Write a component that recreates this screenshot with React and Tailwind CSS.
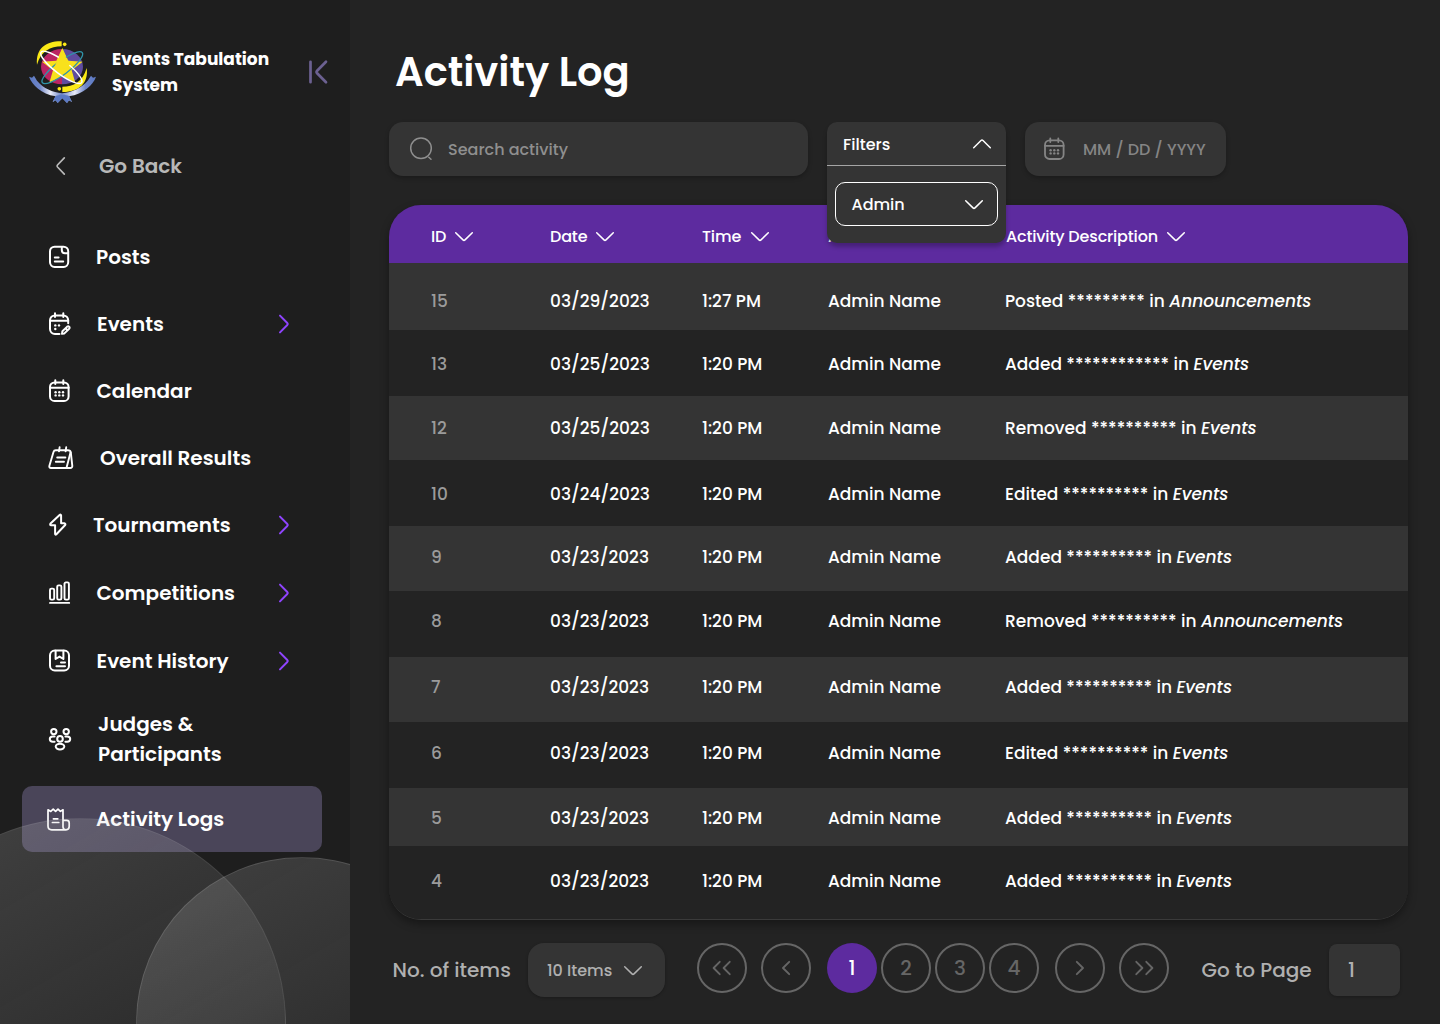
import React from "react";

const Svg = ({ w = 24, h = 24, sw = 2, className = "", children }) => (
  <svg
    width={w}
    height={h}
    viewBox={`0 0 ${w} ${h}`}
    fill="none"
    stroke="currentColor"
    strokeWidth={sw}
    strokeLinecap="round"
    strokeLinejoin="round"
    className={`shrink-0 ${className}`}
  >
    {children}
  </svg>
);

const ChevronDown = ({ className = "" }) => (
  <Svg w={20} h={12} sw={1.5} className={className}>
    <path d="M1.7 1.7 L9 8.9 Q10 9.9 11 8.9 L18.3 1.7" />
  </Svg>
);

const ChevronUp = () => (
  <Svg w={20} h={12} sw={1.5}>
    <path d="M1.7 9.7 L9 2.5 Q10 1.5 11 2.5 L18.3 9.7" />
  </Svg>
);

const NavArrow = () => (
  <Svg w={12} h={20} sw={2} className="text-[#8f44fd]">
    <path d="M2 1.6 L9.3 9 Q10.3 10 9.3 11 L2 18.4" />
  </Svg>
);

const dot = (x, y) => <circle key={`${x}-${y}`} cx={x} cy={y} r="1.2" fill="currentColor" stroke="none" />;

const CalendarIcon = ({ sw = 2, className }) => (
  <Svg sw={sw} className={className}>
    <rect x="3" y="3.4" width="18.6" height="18.6" rx="4.6" />
    <path d="M3 8.8 H21.6 M8.3 1.3 V5 M16.3 1.3 V5" />
    {[8.6, 12.3, 16].map((x) => [13.2, 16.4].map((y) => dot(x, y)))}
  </Svg>
);

const PostsIcon = () => (
  <Svg>
    <rect x="3" y="1.7" width="18.2" height="20.2" rx="4.6" />
    <path d="M14.8 2 V5 Q14.8 8.2 18 8.2 H21 M7.8 12.6 H11.6 M7.8 16.6 H16.2" />
  </Svg>
);

const EventsIcon = () => (
  <Svg>
    <path d="M12.5 22 H8 A5 5 0 0 1 3 17 V8.3 A5 5 0 0 1 8 3.4 H16.2 A5 5 0 0 1 21.2 8.3 V11.2" />
    <path d="M3 8.8 H21.2 M8 1.3 V5 M16.3 1.3 V5" />
    {dot(8.3, 13.4)}
    {dot(12, 13.4)}
    {dot(8.3, 17)}
    <path d="M15 21.8 L15.4 19.2 L20.2 14.6 C21.6 13.6 23.3 15.2 22.2 16.7 L17.4 21.4 Z M18.7 16.4 L20.4 18.2" />
  </Svg>
);

const ResultsIcon = () => (
  <Svg w={27} sw={1.9}>
    <path d="M8.7 4.2 H20.8 C22.6 4.2 23.6 5 23.8 6.5 L25.3 19.8 C25.4 21 24.6 22 23.3 22 H4 C2.7 22 2 21 2.4 19.7 L6.5 6 Q7 4.2 8.7 4.2 Z" />
    <path d="M23.5 6.4 L19.6 21.6 M12.6 1.3 L12 5.4 M19.2 1.3 L18.6 5.4 M10.2 11.5 H18.4 M8.8 15.7 H17" />
  </Svg>
);

const BoltIcon = () => (
  <Svg>
    <path d="M12.6 2 L3.5 10.6 Q2.5 12 4.3 12.3 H8.1 V20.8 Q8.3 22.3 9.4 21.3 L18.2 12 Q18.9 10.6 17.3 10.3 H14.1 V2.5 Q13.8 1 12.6 2 Z" />
  </Svg>
);

const BarsIcon = () => (
  <Svg sw={1.9}>
    <rect x="3" y="7.6" width="4.2" height="11" rx="1.4" />
    <rect x="10.2" y="4.4" width="4.2" height="14.2" rx="1.4" />
    <rect x="17.5" y="1.4" width="4.4" height="17.2" rx="1.4" />
    <path d="M3 21.9 H22.2" />
  </Svg>
);

const HistoryIcon = () => (
  <Svg>
    <rect x="3" y="1.5" width="19" height="20" rx="4.8" />
    <path d="M8.6 1.7 V10 L12.5 7.6 L16.4 10 V1.7 M14 13.4 H18 M9.4 17.3 H18" />
  </Svg>
);

const PeopleIcon = () => (
  <Svg w={26}>
    <circle cx="6.8" cy="4.6" r="2.7" />
    <circle cx="19.2" cy="4.6" r="2.7" />
    <circle cx="13" cy="11.9" r="2.8" />
    <ellipse cx="13" cy="19.6" rx="4.3" ry="2.8" />
    <path d="M7.6 9.5 H5.8 C1.8 9.5 1.8 14.7 5.8 14.7 H7.6 M18.4 9.5 H20.2 C24.2 9.5 24.2 14.7 20.2 14.7 H18.4" />
  </Svg>
);

const LogsIcon = () => (
  <Svg w={26} sw={1.7} className="-mt-px">
    <path d="M2 2.8 V19 Q2 22.8 5.8 22.8 H20 M2 2.8 L4.8 4.4 L7.2 2.2 L9.6 4.4 L12 2.2 L14.4 4.4 L17 2.8 V20 Q17.2 22.8 20 22.8 Q23.2 22.8 23.2 19.6 V16 Q23.2 13.4 20.8 13.4 H17" />
    <path d="M7.4 11.8 H11.8 M6.4 15.5 H12.8" />
  </Svg>
);

const Logo = () => (
  <svg width="68" height="65" viewBox="28 30 204 195" fill="none" className="shrink-0">
    <defs>
      <linearGradient id="ribbon" x1="28" y1="0" x2="230" y2="0" gradientUnits="userSpaceOnUse">
        <stop offset="0" stopColor="#5b79c4" />
        <stop offset="0.16" stopColor="#6f86c8" />
        <stop offset="0.32" stopColor="#e9ebf7" />
        <stop offset="0.48" stopColor="#6f86c8" />
        <stop offset="0.68" stopColor="#e9ebf7" />
        <stop offset="0.84" stopColor="#6f86c8" />
        <stop offset="1" stopColor="#5b79c4" />
      </linearGradient>
    </defs>
    <path d="M127 57 A63 53 0 0 0 127 163 Z" fill="#bb2463" />
    <path d="M127 57 A63 53 0 0 1 127 163 Z" fill="#5f4c9f" />
    <path d="M52 104 C48 56 78 33 126 34 V49 C92 49 64 64 52 104 Z" fill="#fbe916" />
    <circle cx="135" cy="43" r="5.5" fill="#fbe916" />
    <path d="M201 114 C208 160 176 187 128 186 V170 C162 170 189 156 201 114 Z" fill="#fbe916" />
    <circle cx="119" cy="176.5" r="5.5" fill="#fbe916" />
    <path d="M128 54 L146 92 L189 95 L156 121 L167 158 L128 138 L89 158 L100 121 L67 95 L110 92 Z" fill="#f8e11c" />
    <ellipse cx="128" cy="113" rx="75" ry="20" transform="rotate(-37 128 113)" stroke="#2f93a8" strokeWidth="4" />
    <ellipse cx="125" cy="112" rx="76" ry="20" transform="rotate(37 125 112)" stroke="#fff" strokeWidth="4.5" />
    <path d="M128 56 L143 92 L158 94 L140 118 L104 110 L113 92 Z" fill="#f8e11c" />
    <path
      d="M28 140 L37 143 L43 137 L52 152 C72 176 98 186 128 190 C158 186 184 175 204 152 L214 137 L220 143 L229 140 C220 165 192 192 148 199 L157 216 L148 211 L142 219 L128 205 L114 219 L108 211 L99 216 L108 199 C64 192 38 165 28 140 Z"
      fill="url(#ribbon)"
    />
    <path d="M107 199 C118 193 138 193 149 199 L157 216 L148 211 L142 219 L128 205 L114 219 L108 211 L99 216 Z" fill="#5b79c4" />
  </svg>
);

const NAV = [
  { label: "Posts", Icon: PostsIcon, row: "h-[67px]", text: "ml-0" },
  { label: "Events", Icon: EventsIcon, row: "h-[67px]", text: "ml-px", arrow: true },
  { label: "Calendar", Icon: CalendarIcon, row: "h-[67px]", text: "ml-[0.5px]" },
  { label: "Overall Results", Icon: ResultsIcon, row: "h-[67px]", text: "ml-1" },
  { label: "Tournaments", Icon: BoltIcon, row: "h-[67px]", text: "-ml-[3px]", arrow: true },
  { label: "Competitions", Icon: BarsIcon, row: "h-[69px]", text: "ml-[0.5px]", arrow: true },
  { label: "Event History", Icon: HistoryIcon, row: "h-[67px]", text: "ml-[0.5px]", arrow: true },
  { label: "Judges & Participants", Icon: PeopleIcon, row: "h-[89px]", text: "ml-0.5" },
];

function Sidebar() {
  return (
    <aside className="relative h-[1024px] w-[350px] shrink-0 overflow-hidden bg-[#1e1e1e] text-white">
      <div className="flex h-[105px] items-start pt-10 pl-[29px]">
        <Logo />
        <div className="mt-[6px] ml-[15px] w-[180px] text-[17px] leading-[26px] font-bold">
          Events Tabulation System
        </div>
        <Svg w={22} h={26} sw={2.7} className="mt-[19px] ml-[15px] text-[#6c6191]">
          <path d="M3.5 2.8 V23.2 M19 2.8 L9.9 12 Q9 13 9.9 14 L19 23.2" />
        </Svg>
      </div>

      <div className="mt-[46px] flex h-[30px] items-center pl-[55px] text-[#b8b8b8]">
        <Svg w={12} h={20} sw={1.7}>
          <path d="M9.3 1.8 L2.5 9 Q1.6 10 2.5 11 L9.3 18.2" />
        </Svg>
        <span className="ml-8 text-[20px] font-semibold">Go Back</span>
      </div>

      <nav className="mt-[42px] text-[20px] leading-[30px] font-semibold">
        {NAV.map(({ label, Icon, row, text, arrow }) => (
          <div key={label} className={`flex items-center pr-[60px] pl-[47px] ${row}`}>
            <div className="w-[49px] shrink-0">
              <Icon />
            </div>
            <span className={`w-[170px] ${text}`}>{label}</span>
            {arrow && (
              <span className="ml-auto">
                <NavArrow />
              </span>
            )}
          </div>
        ))}
        <div className="mt-[3px] ml-[22px] flex h-[66px] w-[300px] items-center rounded-[10px] bg-[#4a4559] pl-6">
          <div className="w-[50px]">
            <LogsIcon />
          </div>
          <span>Activity Logs</span>
        </div>
      </nav>

      <div className="absolute top-[818px] left-[-126px] size-[412px] rounded-full border border-white/7 bg-linear-150 from-[#c8c8c8]/22 to-[#c8c8c8]/1" />
      <div className="absolute top-[857px] left-[136px] size-[332px] rounded-full border border-white/12 bg-linear-150 from-[#d0d0d0]/20 to-[#d0d0d0]/3" />
    </aside>
  );
}

const COLS = "grid grid-cols-[119px_152px_126px_177px_1fr] pl-[42px]";

const ROWS = [
  ["15", "03/29/2023", "1:27 PM", "Posted *********", "Announcements", "h-[67px] pt-[11px]"],
  ["13", "03/25/2023", "1:20 PM", "Added ************", "Events", "h-[66px] pt-[4px]"],
  ["12", "03/25/2023", "1:20 PM", "Removed **********", "Events", "h-[64px] pt-[2px]"],
  ["10", "03/24/2023", "1:20 PM", "Edited **********", "Events", "h-[66px] pt-[4px]"],
  ["9", "03/23/2023", "1:20 PM", "Added **********", "Events", "h-[65px] pb-px"],
  ["8", "03/23/2023", "1:20 PM", "Removed **********", "Announcements", "h-[66px] pb-[4px]"],
  ["7", "03/23/2023", "1:20 PM", "Added **********", "Events", "h-[65px] pb-[3px]"],
  ["6", "03/23/2023", "1:20 PM", "Edited **********", "Events", "h-[66px] pb-[2px]"],
  ["5", "03/23/2023", "1:20 PM", "Added **********", "Events", "h-[58px] pt-[4px]"],
  ["4", "03/23/2023", "1:20 PM", "Added **********", "Events", "h-[73px] pb-px"],
];

const HeadCell = ({ label, className = "gap-[7.5px]" }) => (
  <div className={`flex items-center ${className}`}>
    <span>{label}</span>
    <ChevronDown />
  </div>
);

function Table() {
  return (
    <section className="mt-[29px] w-[1019px] overflow-hidden rounded-[32px] border-b border-[#3a3a3a] bg-[#232323] text-white shadow-[0_4px_8px_rgba(0,0,0,0.35)]">
      <div className={`${COLS} h-[58px] items-center bg-[#5d2b9f] pt-[5px] text-[16px] font-medium tracking-[-0.01em]`}>
        <HeadCell label="ID" />
        <HeadCell label="Date" />
        <HeadCell label="Time" className="gap-[9px]" />
        <HeadCell label="Admin" />
        <HeadCell label="Activity Description" className="gap-[8px] pl-px" />
      </div>
      {ROWS.map(([id, date, time, action, place, size], i) => (
        <div
          key={id}
          className={`${COLS} items-center text-[17px] font-medium ${size} ${i % 2 === 0 ? "bg-[#343434]" : "bg-[#232323]"}`}
        >
          <span className="text-[#9b9b9b]">{id}</span>
          <span>{date}</span>
          <span>{time}</span>
          <span>Admin Name</span>
          <span className="whitespace-nowrap">
            {action} in <em>{place}</em>
          </span>
        </div>
      ))}
    </section>
  );
}

function Toolbar() {
  return (
    <div className="mt-[20px] flex h-[54px] items-start gap-[19px]">
      <div className="flex h-[54px] w-[419px] items-center rounded-[14px] bg-[#343434] pl-5 text-[16px] font-medium text-[#8f8f8f] shadow-[0_2px_4px_rgba(0,0,0,0.25)]">
        <Svg w={26} h={26} sw={1.5}>
          <circle cx="12" cy="12.3" r="10.3" />
          <path d="M19.8 21.3 L22 23.2" />
        </Svg>
        <span className="ml-[13px] pt-0.5">Search activity</span>
      </div>

      <div className="relative z-10 h-[121px] w-[179px] shrink-0 rounded-[10px] bg-[#343434] text-[16px] font-medium text-white shadow-[0_4px_4px_rgba(0,0,0,0.25)]">
        <div className="flex h-[44px] items-center justify-between border-b border-[#a5a5a5] pr-[14px] pl-4">
          <span className="pt-0.5">Filters</span>
          <ChevronUp />
        </div>
        <div className="mx-2 mt-4 flex h-[44px] items-center justify-between rounded-[10px] border border-white pr-[13px] pl-[15.5px]">
          <span className="pt-0.5">Admin</span>
          <ChevronDown className="mt-px" />
        </div>
      </div>

      <div className="flex h-[54px] w-[201px] items-center rounded-[14px] bg-[#343434] pl-[17px] text-[16px] font-medium text-[#858585] shadow-[0_2px_4px_rgba(0,0,0,0.25)]">
        <CalendarIcon sw={1.8} />
        <span className="ml-[17px] pt-0.5 whitespace-nowrap">MM / DD / YYYY</span>
      </div>
    </div>
  );
}

const PageButton = ({ className = "", active, children }) => (
  <button
    className={`flex size-[50px] shrink-0 items-center justify-center rounded-full text-[20px] font-medium ${
      active ? "bg-[#5d2b9f] text-white" : "border-2 border-[#666] text-[#666]"
    } ${className}`}
  >
    {children}
  </button>
);

function Footer() {
  return (
    <div className="mt-[23px] flex h-[54px] items-start text-[20px] font-medium text-[#b0b0b0]">
      <span className="ml-[3.5px] w-[135px] pt-[12px] whitespace-nowrap">No. of items</span>
      <div className="flex h-[54px] w-[137px] items-center rounded-[16px] bg-[#343434] pl-[19.5px] text-[16px] shadow-[0_1px_3px_rgba(0,0,0,0.25)]">
        <span className="pt-0.5">10 Items</span>
        <ChevronDown className="mt-px ml-[11px]" />
      </div>
      <PageButton className="ml-[32.5px]">
        <Svg w={22} h={18} sw={1.9}>
          <path d="M8.7 2.8 L2.6 9 L8.7 15.2 M18.7 2.8 L12.6 9 L18.7 15.2" />
        </Svg>
      </PageButton>
      <PageButton className="ml-[14px]">
        <Svg w={12} h={18} sw={1.9}>
          <path d="M9.2 2.8 L3 9 L9.2 15.2" />
        </Svg>
      </PageButton>
      <PageButton active className="ml-4">1</PageButton>
      <PageButton className="ml-1">2</PageButton>
      <PageButton className="ml-1">3</PageButton>
      <PageButton className="ml-1">4</PageButton>
      <PageButton className="ml-4">
        <Svg w={12} h={18} sw={1.9}>
          <path d="M2.8 2.8 L9 9 L2.8 15.2" />
        </Svg>
      </PageButton>
      <PageButton className="ml-[14px]">
        <Svg w={22} h={18} sw={1.9}>
          <path d="M3.3 2.8 L9.4 9 L3.3 15.2 M13.3 2.8 L19.4 9 L13.3 15.2" />
        </Svg>
      </PageButton>
      <span className="ml-[32.5px] pt-[12px] whitespace-nowrap">Go to Page</span>
      <div className="mt-px mr-[40px] ml-auto flex h-[52px] w-[71px] items-center rounded-[8px] bg-[#343434] pl-[19px] shadow-[0_1px_3px_rgba(0,0,0,0.25)]">
        1
      </div>
    </div>
  );
}

export default function App() {
  return (
    <div className="flex h-[1024px] w-[1440px] overflow-hidden bg-[#232323] font-[Poppins,Inter,sans-serif]">
      <Sidebar />
      <main className="flex-1 pt-[42px] pl-[39px]">
        <h1 className="ml-[6px] text-[40px] leading-[60px] font-semibold text-white">Activity Log</h1>
        <Toolbar />
        <Table />
        <Footer />
      </main>
    </div>
  );
}
